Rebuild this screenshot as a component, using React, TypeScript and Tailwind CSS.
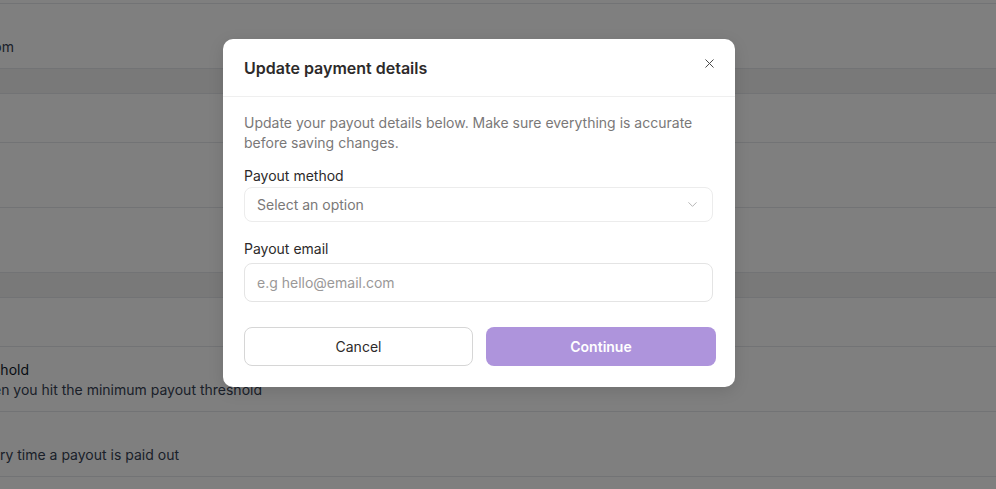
import React, { useState } from 'react';
import { X, ChevronDown } from 'lucide-react';

type Row = { h: string; tone?: 'band'; title?: string; titleW?: string; sub?: string; subW?: string };

// page behind the overlay (scrolled, so text is cut at the left edge)
const rows: Row[] = [
  { h: 'h-[65px]', sub: 'payouts@email.com', subW: 'w-[14px]' },
  { h: 'h-[25px]', tone: 'band' },
  { h: 'h-[49px]' },
  { h: 'h-[65px]' },
  { h: 'h-[65px]' },
  { h: 'h-[25px]', tone: 'band' },
  { h: 'h-[49px]' },
  { h: 'h-[65px]', title: 'Minimum payout threshold', titleW: 'w-[29px]', sub: 'Get paid automatically when you hit the minimum payout threshold', subW: 'w-[262px]' },
  { h: 'h-[65px]', title: 'Payout sent', titleW: 'w-0', sub: 'Receive an email every time a payout is paid out', subW: 'w-[179px]' },
];

function Clip({ w, children, className }: { w?: string; children: React.ReactNode; className: string }) {
  return (
    <div className={`${w} flex justify-end overflow-hidden whitespace-nowrap ${className}`}>
      <span className="shrink-0">{children}</span>
    </div>
  );
}

export default function App() {
  const [email, setEmail] = useState('');

  return (
    <div className="relative h-[489px] w-[996px] overflow-hidden bg-white font-['Inter',sans-serif]">
      <div className="h-[4px] border-b border-gray-200" />
      {rows.map((r, i) => (
        <div
          key={i}
          className={`${r.h} border-b border-gray-200 flex flex-col justify-end pb-[11px] ${r.tone === 'band' ? 'bg-[#f3f3f3]' : ''}`}
        >
          {r.title && (
            <Clip w={r.titleW} className="text-sm leading-5 text-gray-900">{r.title}</Clip>
          )}
          {r.sub && (
            <Clip w={r.subW} className="text-sm leading-5 text-gray-700">{r.sub}</Clip>
          )}
        </div>
      ))}

      {/* overlay */}
      <div className="absolute inset-0 bg-black/50 pl-[223px] pt-[39px]">
        <div className="w-[512px] rounded-[10px] bg-white shadow-[0_4px_16px_rgba(0,0,0,0.12)]">
          <div className="h-[58px] flex items-center justify-between pl-[21px] pr-[18px] border-b border-[#efefef]">
            <h2 className="text-base font-semibold text-[#2d2a2a]">Update payment details</h2>
            <button className="text-[#4a4a4a] -mt-[8px]">
              <X className="w-[15px] h-[15px]" strokeWidth={1.6} />
            </button>
          </div>

          <div className="pl-[21px] pr-[22px] pt-[16px] pb-[21px]">
            <p className="text-sm leading-5 text-[#7a7878]">
              Update your payout details below. Make sure everything is accurate before saving changes.
            </p>

            <label className="block mt-[13px] text-sm leading-5 text-[#2d2a2a]">Payout method</label>
            <button className="mt-[1px] w-full h-[35px] flex items-center justify-between pl-[12px] pr-[12px] rounded-[8px] border border-[#ececec] text-sm text-[#7a7878]">
              <span>Select an option</span>
              <ChevronDown className="w-[15px] h-[15px] text-[#b0b0b0]" strokeWidth={1.5} />
            </button>

            <label className="block mt-[17px] text-sm leading-5 text-[#2d2a2a]">Payout email</label>
            <input
              value={email}
              onChange={e => setEmail(e.target.value)}
              placeholder="e.g hello@email.com"
              className="mt-[4px] w-full h-[39px] px-[12px] rounded-[8px] border border-[#e4e4e4] text-sm text-[#3a3636] placeholder:text-[#9a9898] outline-none"
            />

            <div className="mt-[25px] flex gap-[13px] -mr-[3px]">
              <button className="w-[229px] h-[39px] rounded-[8px] border border-[#d6d6d6] text-sm text-[#2d2a2a]">
                Cancel
              </button>
              <button className="flex-1 h-[39px] rounded-[8px] bg-[#ae94dc] text-sm font-semibold text-white">
                Continue
              </button>
            </div>
          </div>
        </div>
      </div>
    </div>
  );
}
